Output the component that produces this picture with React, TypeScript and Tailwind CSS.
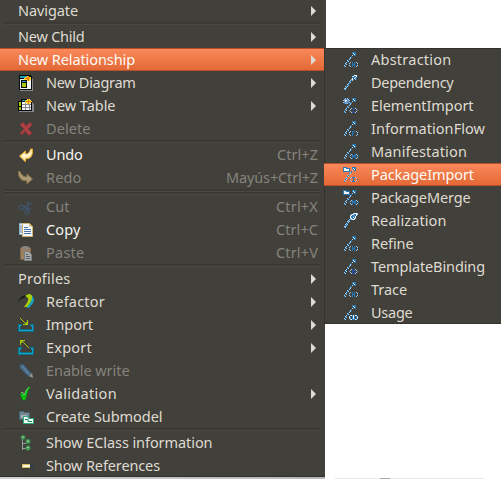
import { useLayoutEffect, useRef } from "react";

const PALETTE: Record<string, string> = {
  b: "#2577b5", l: "#9fcdf2", w: "#f4f8fc", d: "#27509e", m: "#5f91cc", k: "#080808",
  c: "#19a0bd", t: "#08708a", g: "#a4c803", y: "#ffe02a", o: "#f07a10", s: "#85878a",
};

function Pixels({ rows }: { rows: string[] }) {
  return (
    <svg width="16" height="16" viewBox="0 0 16 16" shapeRendering="crispEdges">
      {rows.flatMap((row, y) =>
        [...row].map((ch, x) =>
          PALETTE[ch] ? <rect key={`${x}-${y}`} x={x} y={y} width="1" height="1" fill={PALETTE[ch]} /> : null
        )
      )}
    </svg>
  );
}

const diagram = [
  " kkkkkkkkkkkk   ", " kcccccccyokkk  ", " kcccccyyooyyk  ", " kkkkkyoooooyk  ", " kwwwwyyyooyyks ",
  " kwkkkkkkyoywks ", " kwkcccckwwwwks ", " kwkkkkkkwwwwks ", " kwkggggkwwwwks ", " kwkggggkwwwwks ",
  " kwkggggkwwwwks ", " kwkggggkwwwwks ", " kwkkkkkkwwwwks ", " kwwwwwwwwwwwks ", " kkkkkkkkkkkkks ", "  sssssssssssss ",
];
const table = [
  "                ", "   kkkkkkyoy    ", "   kccccyyoyy   ", "kkkkkkkyoooooyk ", "kggkwwwyyyoyyks ",
  "kggkwwwswyoywks ", "kggkssssssssskss", "kggkwwwswwwswkss", "kkkkwwwswwwswkss", "kggkssssssssskss",
  "kggkwwwswwwswkss", "kggkwwwswwwswkss", "kkkkkkkkkkkkkkss", " sssssssssssssss", "                ", "                ",
];
const importArt = [
  "                ", "  g             ", "   g            ", "    g    g      ", "     g   g      ", "      g gg      ",
  "       ggg      ", "tttt ggggg  tttt", "tcct        tcct", "tct          tct", "tc            ct", "tc            ct",
  "tcttttttttttttct", "tcccccccccccccct", "tttttttttttttttt", "                ",
];
const exportArt = [
  "  ggggg         ", "  ggg           ", "  gg g          ", "  g   g         ", "  g    g        ", "        g       ",
  "         g      ", "tttt      g tttt", "tcct        tcct", "tct          tct", "tc            ct", "tc            ct",
  "tcttttttttttttct", "tcccccccccccccct", "tttttttttttttttt", "                ",
];
const line = [
  "         bbbb   ", "         bwbb   ", "          bwb   ", "         l bb   ", "        b       ", "       lb       ",
  "      bl        ", "      l         ", "    lb          ", "    bl          ", "   l            ", "  lb            ",
  "  bl            ", " l              ", " bl             ", "                ",
];
const stem = [
  "          bwww  ", "         lwbbw  ", "         bbbwb  ", "         wbwbb  ", "        lwb l   ", "       lbl      ",
  "      lb        ", "      bl        ", "     lb         ", "    lb          ", "    bl          ", "  lbl           ",
  "  bl            ", " llb            ", " bl             ", "                ",
];
const realization = [
  "          lwwwl ", "        lwwbbwl ", "       lwbbmbw  ", "       wbbmbw   ", "       wmbwbw   ", "       lwbbwl   ",
  "      lblwwl    ", "     lb         ", "    lbl         ", "    bl          ", "   lb           ", "  lbl           ",
  "  bl            ", " llb            ", " bl             ", "                ",
];
const marks: Record<string, string[]> = {
  H: [" l b b l  ", "l  b b  l ", "b  bbb  b ", "l  b b  l ", " l b b l  "],
  F: [" l bbb l  ", "l  b    l ", "b  bb   b ", "l  b    l ", " l b   l  "],
  M: ["  lb  bl  ", " l bbbb l ", "b  bbbb  b", " l b  b l ", "  lb  bl  "],
  P: ["  lbbbl   ", " l  b  l  ", "b   b   b ", " l  b  l  ", "  lbbbl   "],
  I: ["  ldddl   ", " l  d  l  ", "m   d   m ", " l  d  l  ", "  ldddl   "],
  B: ["  ldddl   ", " l d d l  ", "m  ddd  m ", " l d d l  ", "  ldddl   "],
  U: [" lwbwbwl  ", "lb bwb bl ", "wb bwb bw ", "lb bwb bl ", " lwbbbwl  "],
};

function withMark(mark: string, extra: "" | "folder" | "star" = "") {
  const art = line.map((r) => [...r]);
  marks[mark].forEach((r, y) =>
    [...r].forEach((ch, x) => { art[10 + y][6 + x] = ch; })
  );
  const folder = ["bbbb   ", "bwwbbbb", "bwwwwwb", "bwwwwwb", "bbbbbbb"];
  const star = ["d l l d", " lmmml ", "lmwwmml", " mwmmm ", "lmmmmml", " dlml d"];
  const top = extra === "folder" ? folder : extra === "star" ? star : [];
  top.forEach((r, y) => [...r].forEach((ch, x) => { art[y][x] = ch; }));
  return art.map((r) => r.join(""));
}

const svg = "block h-4 w-4 overflow-visible";
const icons: Record<string, React.ReactNode> = {
  diagram: <Pixels rows={diagram} />,
  table: <Pixels rows={table} />,
  import: <Pixels rows={importArt} />,
  export: <Pixels rows={exportArt} />,
  delete: <svg className={svg} viewBox="0 0 16 16"><path d="M2 4 4 2q1-1 2 0l2 3 3-3q1-1 2 0l1 2-4 4 4 4-2 2h-2l-3-4-3 4H4l-2-2 4-4z" fill="#ac4145" stroke="#853439" /></svg>,
  undo: <svg className={svg} viewBox="0 0 16 16"><path d="m1.500 9 6-5v3q4 0 5-5h2q1 10-7 10v3z" fill="#ffe9a5" stroke="#e1a62c" /><path d="m4 9 3-2v1q5 0 7-4-1 6-7 5v2z" fill="#fffbed" /></svg>,
  redo: <svg className={svg} viewBox="0 0 16 16"><path d="M14.500 9 9 4v3Q4 7 2 1.500H.5Q0 11 9 11v3z" fill="#a99b77" stroke="#8d7446" /></svg>,
  cut: <svg className={svg} viewBox="0 0 16 16" fill="none" stroke="#3e566d" strokeWidth="1.3"><circle cx="3.5" cy="8.5" r="2.200" /><circle cx="9" cy="13" r="2" /><path d="M6 8 14 4M9 10l1-8M6 8l3 2 4-1" /></svg>,
  copy: <svg className={svg} viewBox="0 0 16 16"><path d="M1.500 1.500h6v11h-6z" fill="#e4edf4" stroke="#8eb0c7" /><path d="M2 4h2M2 6h2M2 8h2M2 10h2" stroke="#648dac" /><path d="M4.500 1.500h7l3 3v10h-10z" fill="#f4f8fd" stroke="#d3b477" /><path d="M11.500 1.500v3h3z" fill="#d5a54b" /><path d="M6 5.500h4M6 7.500h7M6 9.500h7M6 11.500h7" stroke="#4c79a6" /></svg>,
  paste: <svg className={svg} viewBox="0 0 16 16"><rect x="2.500" y="2.500" width="10" height="12" rx="1" fill="#9b8060" stroke="#80684c" /><path d="M4 4V2l2-1h3l2 1v2z" fill="#858580" /><path d="M6.500 6.500h4l3 3v6h-7z" fill="#aaa9a2" stroke="#788086" /><path d="M8 9.500h2M8 11.500h4M8 13.500h4" stroke="#4f657c" /></svg>,
  refactor: <svg className={svg} viewBox="0 0 16 16"><path d="M0 8Q2 2 8 1l2 2Q4 3 0 8" fill="#151a1c" /><path d="M11 1q3-1 4 2 2 3 0 6l-4 5H9q3-7 2-13z" fill="#159ec0" /><path d="M7 2q5-4 7 0 1 4-5 11H6q5-6 4-9-1-1-3-2z" fill="#a9cf08" /></svg>,
  pencil: <svg className={svg} viewBox="0 0 16 16"><path d="m2 2 3-1 8 9 1 4-4-1-8-8z" fill="#496b87" stroke="#345877" /><path d="m4 3 7 8" stroke="#7590a3" /><path d="m11 13 3-3 1 5z" fill="#98958a" /></svg>,
  check: <svg className={svg} viewBox="0 0 16 16"><path d="m2.500 8 2-1 1.500 4Q7 5 10 2l2-1q-3 4-4 10l-1 3H5z" fill="#00dc0b" stroke="#0a9b0d" /><path d="M3 6.500h2l1 3Q8 3 11 1" fill="none" stroke="#caf3c9" strokeWidth=".5" /></svg>,
  submodel: <svg className={svg} viewBox="0 0 16 16"><path d="M1.500 10.500v-8h4l1 1h5v7z" fill="#758590" stroke="#456478" /><path d="M3 6h6v3H3z" fill="#a5aeb2" /><path d="M5.500 7.500h4l1 2h5v5h-10z" fill="#f3fff3" stroke="#2da878" /><path d="M7 10.500h3v2h4" fill="none" stroke="#158466" /></svg>,
  tree: <svg className={svg} viewBox="0 0 16 16"><path d="M4.500 4v11M4.500 8.500H8M4.500 13.500H8" stroke="#91a1a0" fill="none" /><g fill="#499c59" stroke="#367948" strokeWidth=".5"><circle cx="5" cy="2.500" r="2.300" /><circle cx="10" cy="6.500" r="2.400" /><circle cx="10" cy="13" r="2.400" /></g><path d="M4 2h2M9 6h2M9 12.500h2" stroke="#9dd197" /></svg>,
  reference: <svg className={svg} viewBox="0 0 16 16" shapeRendering="crispEdges"><path d="M4.500 6.500h8v3h-8z" fill="#fff8d0" stroke="#d9ba68" /><path d="M12.500 6v4M12 8.500h3M14.500 7v3" stroke="#233951" /></svg>,
  H: <Pixels rows={withMark("H")} />,
  F: <Pixels rows={withMark("F")} />,
  M: <Pixels rows={withMark("M")} />,
  B: <Pixels rows={withMark("B")} />,
  U: <Pixels rows={withMark("U")} />,
  element: <Pixels rows={withMark("I", "star")} />,
  packageImport: <Pixels rows={withMark("P", "folder")} />,
  packageMerge: <Pixels rows={withMark("M", "folder")} />,
  dependency: <Pixels rows={stem} />,
  realization: <Pixels rows={realization} />,
};

/* Spreads the letters so that the label takes the given width. */
function Label({ text, width }: { text: string; width: number }) {
  const ref = useRef<HTMLSpanElement>(null);
  useLayoutEffect(() => {
    const el = ref.current;
    if (!el) return;
    el.style.letterSpacing = "0px";
    el.style.letterSpacing = `${(width - el.getBoundingClientRect().width) / text.length}px`;
  }, [text, width]);
  return <span ref={ref} className="inline-block whitespace-pre">{text}</span>;
}

type Item = { text: string; width: number; icon?: string; arrow?: boolean; off?: boolean; bright?: boolean; on?: boolean; keys?: string; keysWidth?: number };

const groups: Item[][] = [
  [{ text: "Navigate", width: 60, arrow: true }],
  [
    { text: "New Child", width: 66.5, arrow: true },
    { text: "New Relationship", width: 117, arrow: true, on: true },
    { text: "New Diagram", width: 89.5, icon: "diagram", arrow: true },
    { text: "New Table", width: 69.5, icon: "table", arrow: true },
    { text: "Delete", width: 44.5, icon: "delete", off: true },
  ],
  [
    { text: "Undo", width: 36.5, icon: "undo", bright: true, keys: "Ctrl+Z", keysWidth: 41 },
    { text: "Redo", width: 35.5, icon: "redo", off: true, keys: "Mayús+Ctrl+Z", keysWidth: 92 },
  ],
  [],
  [
    { text: "Cut", width: 23.5, icon: "cut", off: true, keys: "Ctrl+X", keysWidth: 42 },
    { text: "Copy", width: 34.5, icon: "copy", bright: true, keys: "Ctrl+C", keysWidth: 42 },
    { text: "Paste", width: 38.5, icon: "paste", off: true, keys: "Ctrl+V", keysWidth: 42 },
  ],
  [
    { text: "Profiles", width: 52.5, arrow: true },
    { text: "Refactor", width: 59, icon: "refactor", arrow: true },
    { text: "Import", width: 47, icon: "import", arrow: true },
    { text: "Export", width: 46, icon: "export", arrow: true },
    { text: "Enable write", width: 83.5, icon: "pencil", off: true },
    { text: "Validation", width: 71, icon: "check", arrow: true },
    { text: "Create Submodel", width: 116.5, icon: "submodel" },
  ],
  [
    { text: "Show EClass information", width: 166.5, icon: "tree" },
    { text: "Show References", width: 114, icon: "reference" },
  ],
];

const relationships: Item[] = [
  { text: "Abstraction", width: 80.5, icon: "H" },
  { text: "Dependency", width: 82.5, icon: "dependency" },
  { text: "ElementImport", width: 102.5, icon: "element" },
  { text: "InformationFlow", width: 114, icon: "F" },
  { text: "Manifestation", width: 96, icon: "M" },
  { text: "PackageImport", width: 103, icon: "packageImport", on: true },
  { text: "PackageMerge", width: 99.5, icon: "packageMerge" },
  { text: "Realization", width: 75.5, icon: "realization" },
  { text: "Refine", width: 42.5, icon: "H" },
  { text: "TemplateBinding", width: 114, icon: "B" },
  { text: "Trace", width: 36, icon: "H" },
  { text: "Usage", width: 41.5, icon: "U" },
];

const highlight = "border-y border-[#b84f29] bg-linear-to-b from-[#fa8859] to-[#e36936] text-[#fffaf5]";

function Row({ item, inset = "pl-[18px]" }: { item: Item; inset?: string }) {
  const tone = item.on
    ? highlight
    : item.off ? "border-y border-transparent text-[#85837c]" : item.bright ? "border-y border-transparent text-[#f5f4f0]" : "border-y border-transparent text-[#dfdbd2]";
  return (
    <div className={`flex h-[23px] shrink-0 items-center pr-[6px] ${inset} ${tone}`}>
      {item.icon && <span className="mr-3 h-4 w-4 shrink-0">{icons[item.icon]}</span>}
      <Label text={item.text} width={item.width} />
      <span className="flex-1" />
      {item.keys && <span className="text-[#85837c]"><Label text={item.keys} width={item.keysWidth ?? 42} /></span>}
      {item.arrow && <svg className="mr-[2px] h-[10px] w-[5px]" viewBox="0 0 5 10"><path d="M0 0 5 5 0 10z" fill="#dfdbd2" /></svg>}
    </div>
  );
}

export default function App() {
  return (
    <div className="flex h-[479px] w-[501px] items-start overflow-hidden bg-white font-['Noto_Sans',sans-serif] text-[14.5px] leading-[21px]">
      <div className="h-[479px] w-[325px] shrink-0 bg-linear-to-r from-[#d0d0d0] to-[#b8b8b8]">
        <div className="-mt-px flex h-[478px] w-[325px] flex-col border-b border-[#302f2b] bg-[#42403a] pr-px">
          {groups.map((group, i) => (
            <div key={i} className="flex flex-col">
              {i > 0 && <div className="mx-1 flex h-[3px] flex-col"><div className="h-px bg-[#393833]" /><div className="h-px bg-[#3d3b36]" /><div className="h-px bg-[#494740]" /></div>}
              {group.map((item) => <Row key={item.text} item={item} />)}
            </div>
          ))}
        </div>
      </div>
      <div className="flex h-[479px] w-44 flex-col">
        <div className="h-12 w-px bg-[#45433e]" />
        <div className="-ml-px w-[177px] bg-[#42403a] shadow-[inset_1px_1px_0_#34332f,inset_0_-1px_0_#34332f]">
          {relationships.map((item) => <Row key={item.text} item={item} inset="pl-[19px]" />)}
        </div>
        <div className="mt-[154px] ml-[10px] flex h-px w-[149px] bg-[#e8e8e8] pl-[45px]"><span className="w-[10px] bg-[#aaa]" /></div>
      </div>
    </div>
  );
}
